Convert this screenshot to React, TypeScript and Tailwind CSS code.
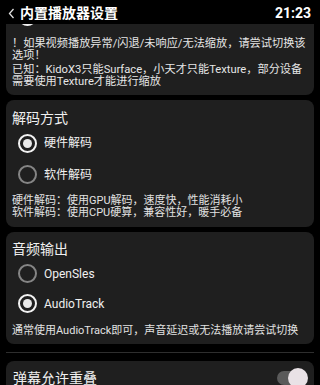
import React from "react";

const Radio: React.FC<{ checked?: boolean }> = ({ checked = false }) => (
  <div
    className={`w-[19px] h-[19px] rounded-full border-2 flex items-center justify-center shrink-0 ${
      checked ? "border-[#f2f2f2]" : "border-[#858585]"
    }`}
  >
    {checked && <div className="w-[9px] h-[9px] rounded-full bg-[#e9e9e9]" />}
  </div>
);

const Option: React.FC<{ label: string; checked?: boolean; h: string }> = ({
  label,
  checked,
  h,
}) => (
  <div className={`flex items-center ${h} pl-[6px]`}>
    <Radio checked={checked} />
    <span className="ml-[7px] text-[12px] text-[#f0f0f0]">{label}</span>
  </div>
);

export default function App() {
  return (
    <div className="w-[320px] h-[385px] bg-black overflow-hidden font-['Roboto','Noto_Sans_CJK_SC',sans-serif] text-white">
      {/* Header */}
      <div className="h-[24px] pt-[2px] flex items-center pl-[8px] pr-[9px]">
        <svg width="7" height="11" viewBox="0 0 7 11" fill="none">
          <path d="M5.5 1 L1.5 5.5 L5.5 10" stroke="#e0e0e0" strokeWidth="1.3" />
        </svg>
        <h1 className="ml-[5px] text-[14px] font-bold leading-none">内置播放器设置</h1>
        <span className="ml-auto text-[14px] font-bold leading-none">21:23</span>
      </div>

      <div className="flex flex-col px-[6px]">
        {/* Warning card, scrolled under header */}
        <div className="bg-[#1f1f1f] rounded-b-lg px-[6px] pb-[7px]">
          <div className="h-[2px] overflow-hidden pl-[6px]">
            <div className="w-[19px] h-[19px] -mt-[17px] rounded-full border-2 border-[#f2f2f2]" />
          </div>
          <div className="mt-[12px] text-[11.2px] leading-[12px] text-[#e6e6e6] whitespace-nowrap">
            <span className="block">！如果视频播放异常/闪退/未响应/无法缩放，请尝试切换该</span>
            <span className="block">选项！</span>
            <span className="block mt-[1.5px]">已知：KidoX3只能Surface，小天才只能Texture，部分设备</span>
            <span className="block">需要使用Texture才能进行缩放</span>
          </div>
        </div>

        {/* Decode mode */}
        <div className="mt-[5px] bg-[#1f1f1f] rounded-lg px-[6px] pt-[8px] pb-[8px]">
          <div className="text-[14px] leading-[20px] text-[#f0f0f0]">解码方式</div>
          <Option label="硬件解码" checked h="h-[31px]" />
          <Option label="软件解码" h="h-[32px]" />
          <div className="mt-[4px] text-[11px] leading-[12px] text-[#e2e2e2] whitespace-nowrap">
            <span className="block">硬件解码：使用GPU解码，速度快，性能消耗小</span>
            <span className="block">软件解码：使用CPU硬算，兼容性好，暖手必备</span>
          </div>
        </div>

        {/* Audio output */}
        <div className="mt-[5px] bg-[#1f1f1f] rounded-lg px-[6px] pt-[7px] pb-[7px]">
          <div className="text-[14px] leading-[20px] text-[#f0f0f0]">音频输出</div>
          <Option label="OpenSles" h="h-[30px]" />
          <Option label="AudioTrack" checked h="h-[30px]" />
          <div className="mt-[6px] text-[11px] leading-[12px] text-[#e2e2e2] whitespace-nowrap">
            通常使用AudioTrack即可，声音延迟或无法播放请尝试切换
          </div>
        </div>

        <div className="mt-[8px] h-px bg-[#2e2e2e]" />

        {/* Danmaku overlap */}
        <div className="mt-[8px] bg-[#1f1f1f] rounded-lg pl-[7px] pr-[6px] pt-[7px] pb-[8px] flex items-center">
          <span className="text-[14px] leading-[20px] text-[#f0f0f0]">弹幕允许重叠</span>
          <div className="ml-auto relative w-[31px] h-[20px] flex items-center">
            <div className="w-[30px] h-[14px] rounded-full bg-[#5a5a5a]" />
            <div className="absolute right-0 top-0 w-[20px] h-[20px] rounded-full bg-[#e9e2e6]" />
          </div>
        </div>
      </div>
    </div>
  );
}
